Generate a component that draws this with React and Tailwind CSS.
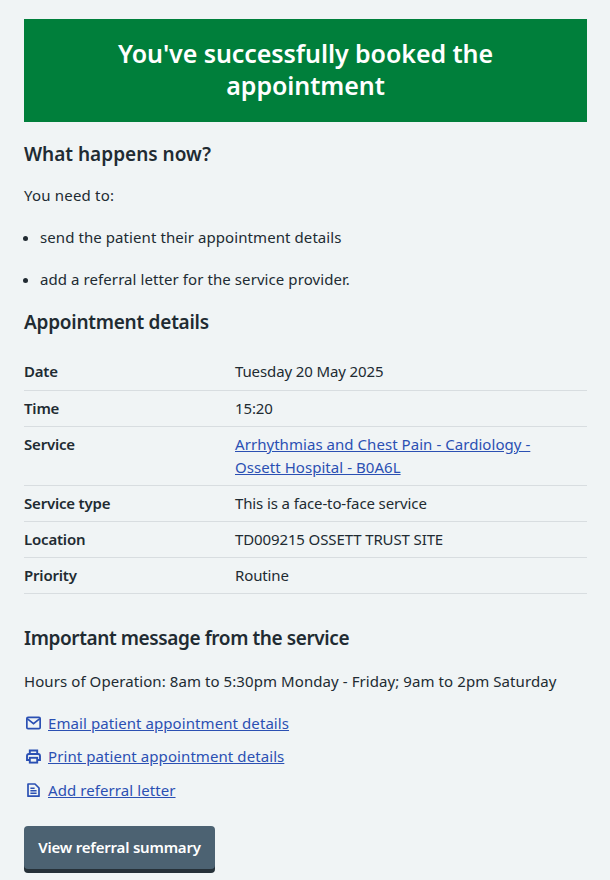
import React from 'react';

const details = [
  { label: 'Date', value: 'Tuesday 20 May 2025', h: 'h-[38px] pt-[6px]' },
  { label: 'Time', value: '15:20', h: 'h-[36px] pt-[5px]' },
  { label: 'Service', link: true, h: 'h-[59px] pt-[5px]' },
  { label: 'Service type', value: 'This is a face-to-face service', h: 'h-[36px] pt-[5px]' },
  { label: 'Location', value: 'TD009215 OSSETT TRUST SITE', h: 'h-[36px] pt-[5px]' },
  { label: 'Priority', value: 'Routine', h: 'h-[36px] pt-[5px]' },
];

function MailIcon() {
  return (
    <svg width="18" height="18" viewBox="0 0 18 18" fill="none" stroke="currentColor" strokeWidth="1.7">
      <rect x="2.85" y="3.35" width="13.3" height="11.3" rx="1.2" />
      <path d="M3.2 4.6l6.3 5 6.3-5" />
    </svg>
  );
}

function PrintIcon() {
  return (
    <svg width="18" height="18" viewBox="0 0 18 18" fill="none" stroke="currentColor" strokeWidth="1.9">
      <path d="M5.8 6.8V3.5h7.4v3.3" />
      <path d="M5.4 13H3V9a2 2 0 0 1 2-2h9a2 2 0 0 1 2 2v4h-2.4" />
      <rect x="5.8" y="10.8" width="7.4" height="4.8" />
    </svg>
  );
}

function FileIcon() {
  return (
    <svg width="18" height="18" viewBox="0 0 18 18" fill="none" stroke="currentColor" strokeWidth="1.7">
      <path d="M4 3h7l4 4v8.2H4z" strokeLinejoin="round" />
      <path d="M6.4 7.3h4.2M6.4 9.8h6.2M6.4 12.3h6.2" strokeWidth="1.4" />
    </svg>
  );
}

export default function App() {
  return (
    <div className="min-h-[880px] bg-[#f0f4f5] pl-6 pr-[23px] pt-[19px] text-[15px] leading-6 tracking-[0.08px] text-[#212b32] font-['Noto_Sans',sans-serif]">
      <div className="bg-[#007f3b] text-white text-center font-semibold text-[25px] leading-[32px] tracking-[-0.07px] px-20 pt-[18px] pb-[19px] h-[103px]">
        You've successfully booked the appointment
      </div>

      <h2 className="mt-[19px] text-[19px] leading-[26px] tracking-normal font-semibold">What happens now?</h2>
      <p className="mt-[16px] tracking-[0.2px]">You need to:</p>
      <ul className="mt-[18px] list-disc pl-4">
        <li>send the patient their appointment details</li>
        <li className="mt-[18px]">add a referral letter for the service provider.</li>
      </ul>

      <h2 className="mt-[18px] text-[19px] leading-[26px] tracking-[-0.25px] font-semibold">Appointment details</h2>

      <div className="mt-[18px]">
        {details.map((row) => (
          <div key={row.label} className={`flex border-b border-[#d8dde0] ${row.h}`}>
            <div className="w-[211px] font-semibold tracking-[-0.2px]">{row.label}</div>
            <div className="flex-1 leading-[23px] pt-px tracking-[-0.12px]">
              {row.link ? (
                <a href="#" className="text-[#2b50b3] underline tracking-[0.05px]">
                  Arrhythmias and Chest Pain - Cardiology -<br />Ossett Hospital - B0A6L
                </a>
              ) : row.value}
            </div>
          </div>
        ))}
      </div>

      <h2 className="mt-[31px] text-[19px] leading-[26px] tracking-[-0.4px] font-semibold">Important message from the service</h2>
      <p className="mt-[18px]">Hours of Operation: 8am to 5:30pm Monday - Friday; 9am to 2pm Saturday</p>

      <div className="mt-[18px] flex flex-col gap-[9px] text-[#2b50b3]">
        <a href="#" className="flex items-center gap-[6px]"><MailIcon /><span className="underline">Email patient appointment details</span></a>
        <a href="#" className="flex items-center gap-[6px]"><PrintIcon /><span className="underline">Print patient appointment details</span></a>
        <a href="#" className="flex items-center gap-[6px] mt-px"><FileIcon /><span className="underline">Add referral letter</span></a>
      </div>

      <button className="mt-[24px] w-[191px] h-[43px] pb-[2px] rounded-[4px] bg-[#4c6272] text-white font-semibold tracking-[-0.2px] shadow-[0_4px_0_#263139]">
        View referral summary
      </button>
    </div>
  );
}
